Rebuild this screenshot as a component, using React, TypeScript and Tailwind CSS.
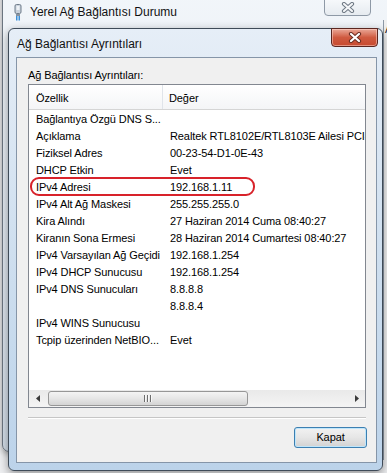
import React from "react";

const rows: [string, string][] = [
  ["Bağlantıya Özgü DNS S...", ""],
  ["Açıklama", "Realtek RTL8102E/RTL8103E Ailesi PCI-E Fast Ethernet NIC (NDIS 6.20)"],
  ["Fiziksel Adres", "00-23-54-D1-0E-43"],
  ["DHCP Etkin", "Evet"],
  ["IPv4 Adresi", "192.168.1.11"],
  ["IPv4 Alt Ağ Maskesi", "255.255.255.0"],
  ["Kira Alındı", "27 Haziran 2014 Cuma 08:40:27"],
  ["Kiranın Sona Ermesi", "28 Haziran 2014 Cumartesi 08:40:27"],
  ["IPv4 Varsayılan Ağ Geçidi", "192.168.1.254"],
  ["IPv4 DHCP Sunucusu", "192.168.1.254"],
  ["IPv4 DNS Sunucuları", "8.8.8.8"],
  ["", "8.8.8.4"],
  ["IPv4 WINS Sunucusu", ""],
  ["Tcpip üzerinden NetBIO...", "Evet"],
];

function CloseGlyph({ color, outline }: { color: string; outline: string }) {
  return (
    <svg width="14" height="11" viewBox="0 0 14 11">
      <path d="M3 2 L11 9 M11 2 L3 9" stroke={outline} strokeWidth="4.2" strokeLinecap="round" />
      <path d="M3 2 L11 9 M11 2 L3 9" stroke={color} strokeWidth="2.2" strokeLinecap="round" />
    </svg>
  );
}

function NetIcon() {
  return (
    <svg width="10" height="17" viewBox="0 0 10 17">
      <rect x="2" y="0.5" width="6" height="9" rx="1.5" fill="#c9d2dc" stroke="#6f7c8a" />
      <rect x="3.5" y="2" width="3" height="4" fill="#eef2f6" />
      <rect x="3" y="10" width="4" height="2" fill="#8793a0" />
      <path d="M3.5 12 V16.5 M5 12 V16.5 M6.5 12 V16.5" stroke="#3b8fd8" strokeWidth="1" />
    </svg>
  );
}

function ScrollBar() {
  return (
    <div className="flex h-[17px] items-stretch bg-gradient-to-b from-[#e9e9e9] to-[#f4f4f4]">
      <div className="flex w-[17px] items-center justify-center">
        <svg width="4" height="7" viewBox="0 0 4 7">
          <path d="M4 0 L0 3.5 L4 7 Z" fill="#3a3a3a" />
        </svg>
      </div>
      <div className="my-[1px] ml-[2px] flex w-[200px] items-center justify-center rounded-[3px] border border-[#979797] bg-gradient-to-b from-[#f4f4f4] via-[#e6e6e6] to-[#d4d4d4]">
        <div className="flex gap-[1px]">
          <span className="h-[7px] w-[2px] border-l border-[#6d6d6d] bg-[#f8f8f8]" />
          <span className="h-[7px] w-[2px] border-l border-[#6d6d6d] bg-[#f8f8f8]" />
          <span className="h-[7px] w-[2px] border-l border-[#6d6d6d] bg-[#f8f8f8]" />
        </div>
      </div>
      <div className="flex-1" />
      <div className="flex w-[17px] items-center justify-center">
        <svg width="4" height="7" viewBox="0 0 4 7">
          <path d="M0 0 L4 3.5 L0 7 Z" fill="#3a3a3a" />
        </svg>
      </div>
    </div>
  );
}

export default function App() {
  return (
    <div className="relative h-[473px] w-[387px] overflow-hidden bg-[#eeeff1] font-['Liberation_Sans',Arial,sans-serif] text-[11px] tracking-[-0.1px] text-black">
      {/* back window */}
      <div className="absolute left-[2px] top-[-12px] h-[464px] w-[420px] rounded-[7px] border border-[#6b7580] bg-gradient-to-b from-[#f2f6fa] via-[#e2e9f1] to-[#d3dde8] shadow-[0_2px_6px_rgba(0,0,0,0.35)]">
        <div className="absolute left-[380px] top-[31px] h-[440px] w-[40px] border-l border-[#8d99a6] bg-[#f0f0f0] pl-[1px] text-[12px] text-[#222]">
          A
        </div>
      </div>
      <div className="absolute left-[13px] top-[4px]">
        <NetIcon />
      </div>
      <div className="absolute left-[30px] top-[4px] text-[12px] leading-[16px] tracking-normal text-[#111]">
        Yerel Ağ Bağlantısı Durumu
      </div>
      <div className="absolute left-[324px] top-[-3px] flex h-[19px] w-[47px] items-center justify-center rounded-b-[4px] border border-[#8e99a6] bg-gradient-to-b from-[#f8fafc] to-[#e6ebf0] pt-[2px]">
        <CloseGlyph color="#f4f6f8" outline="#6e7884" />
      </div>

      {/* front dialog */}
      <div className="absolute left-[8px] top-[28px] flex h-[443px] w-[375px] flex-col rounded-[6px] border border-[#3f4b58] bg-gradient-to-b from-[#e6eef7] via-[#cfdfef] to-[#bcd3ea] shadow-[0_3px_10px_rgba(0,0,0,0.4)]">
        <div className="flex h-[28px] items-center pl-[8px] pt-[1px] text-[12px] tracking-normal text-[#111]">
          Ağ Bağlantısı Ayrıntıları
        </div>
        <div className="absolute right-[4px] top-[-1px] flex h-[19px] w-[47px] items-center justify-center rounded-b-[4px] border border-[#5a2620] bg-gradient-to-b from-[#e9a797] via-[#cf5a40] to-[#c74a2f] shadow-[inset_0_0_0_1px_rgba(255,220,210,0.5)]">
          <CloseGlyph color="#ffffff" outline="#6a2d22" />
        </div>

        <div className="ml-[7px] flex h-[406px] w-[361px] flex-col border border-[#8595a8] bg-[#f0f0f0] pl-[11px]">
          <div className="mt-[10px] leading-[14px]">Ağ Bağlantısı Ayrıntıları:</div>
          <div className="relative mt-[2px] flex h-[324px] w-[338px] flex-col border border-[#828790] bg-white">
            <div className="flex h-[25px] border-b border-[#d5d5d5] bg-gradient-to-b from-white to-[#f4f5f7]">
              <div className="flex w-[134px] items-center border-r border-[#e0e4ea] pl-[7px] pt-[2px]">Özellik</div>
              <div className="flex items-center pl-[6px] pt-[2px]">Değer</div>
            </div>
            <div className="flex flex-1 flex-col pt-[1px]">
              {rows.map(([k, v], i) => (
                <div key={i} className="flex h-[17px] items-center whitespace-nowrap">
                  <div className="w-[134px] overflow-hidden pl-[7px]">{k}</div>
                  <div className="w-[202px] overflow-hidden pl-[7px]">{v}</div>
                </div>
              ))}
            </div>
            <ScrollBar />
            <div className="absolute left-[1px] top-[92px] h-[19px] w-[225px] rounded-[9px] border-2 border-[#d8222a]" />
          </div>
          <div className="mt-[9px] h-[2px] w-[338px] border-t border-[#c6c6c6] bg-white" />
          <div className="mt-[8px] flex w-[339px] justify-end">
            <button
              type="button"
              className="flex h-[21px] w-[73px] items-center justify-center rounded-[3px] border border-[#3c7fb1] bg-gradient-to-b from-[#f2f2f2] via-[#e6e6e6] to-[#d2d2d2] shadow-[inset_0_0_0_1px_#bfe6fb]"
            >
              Kapat
            </button>
          </div>
        </div>
      </div>
    </div>
  );
}
